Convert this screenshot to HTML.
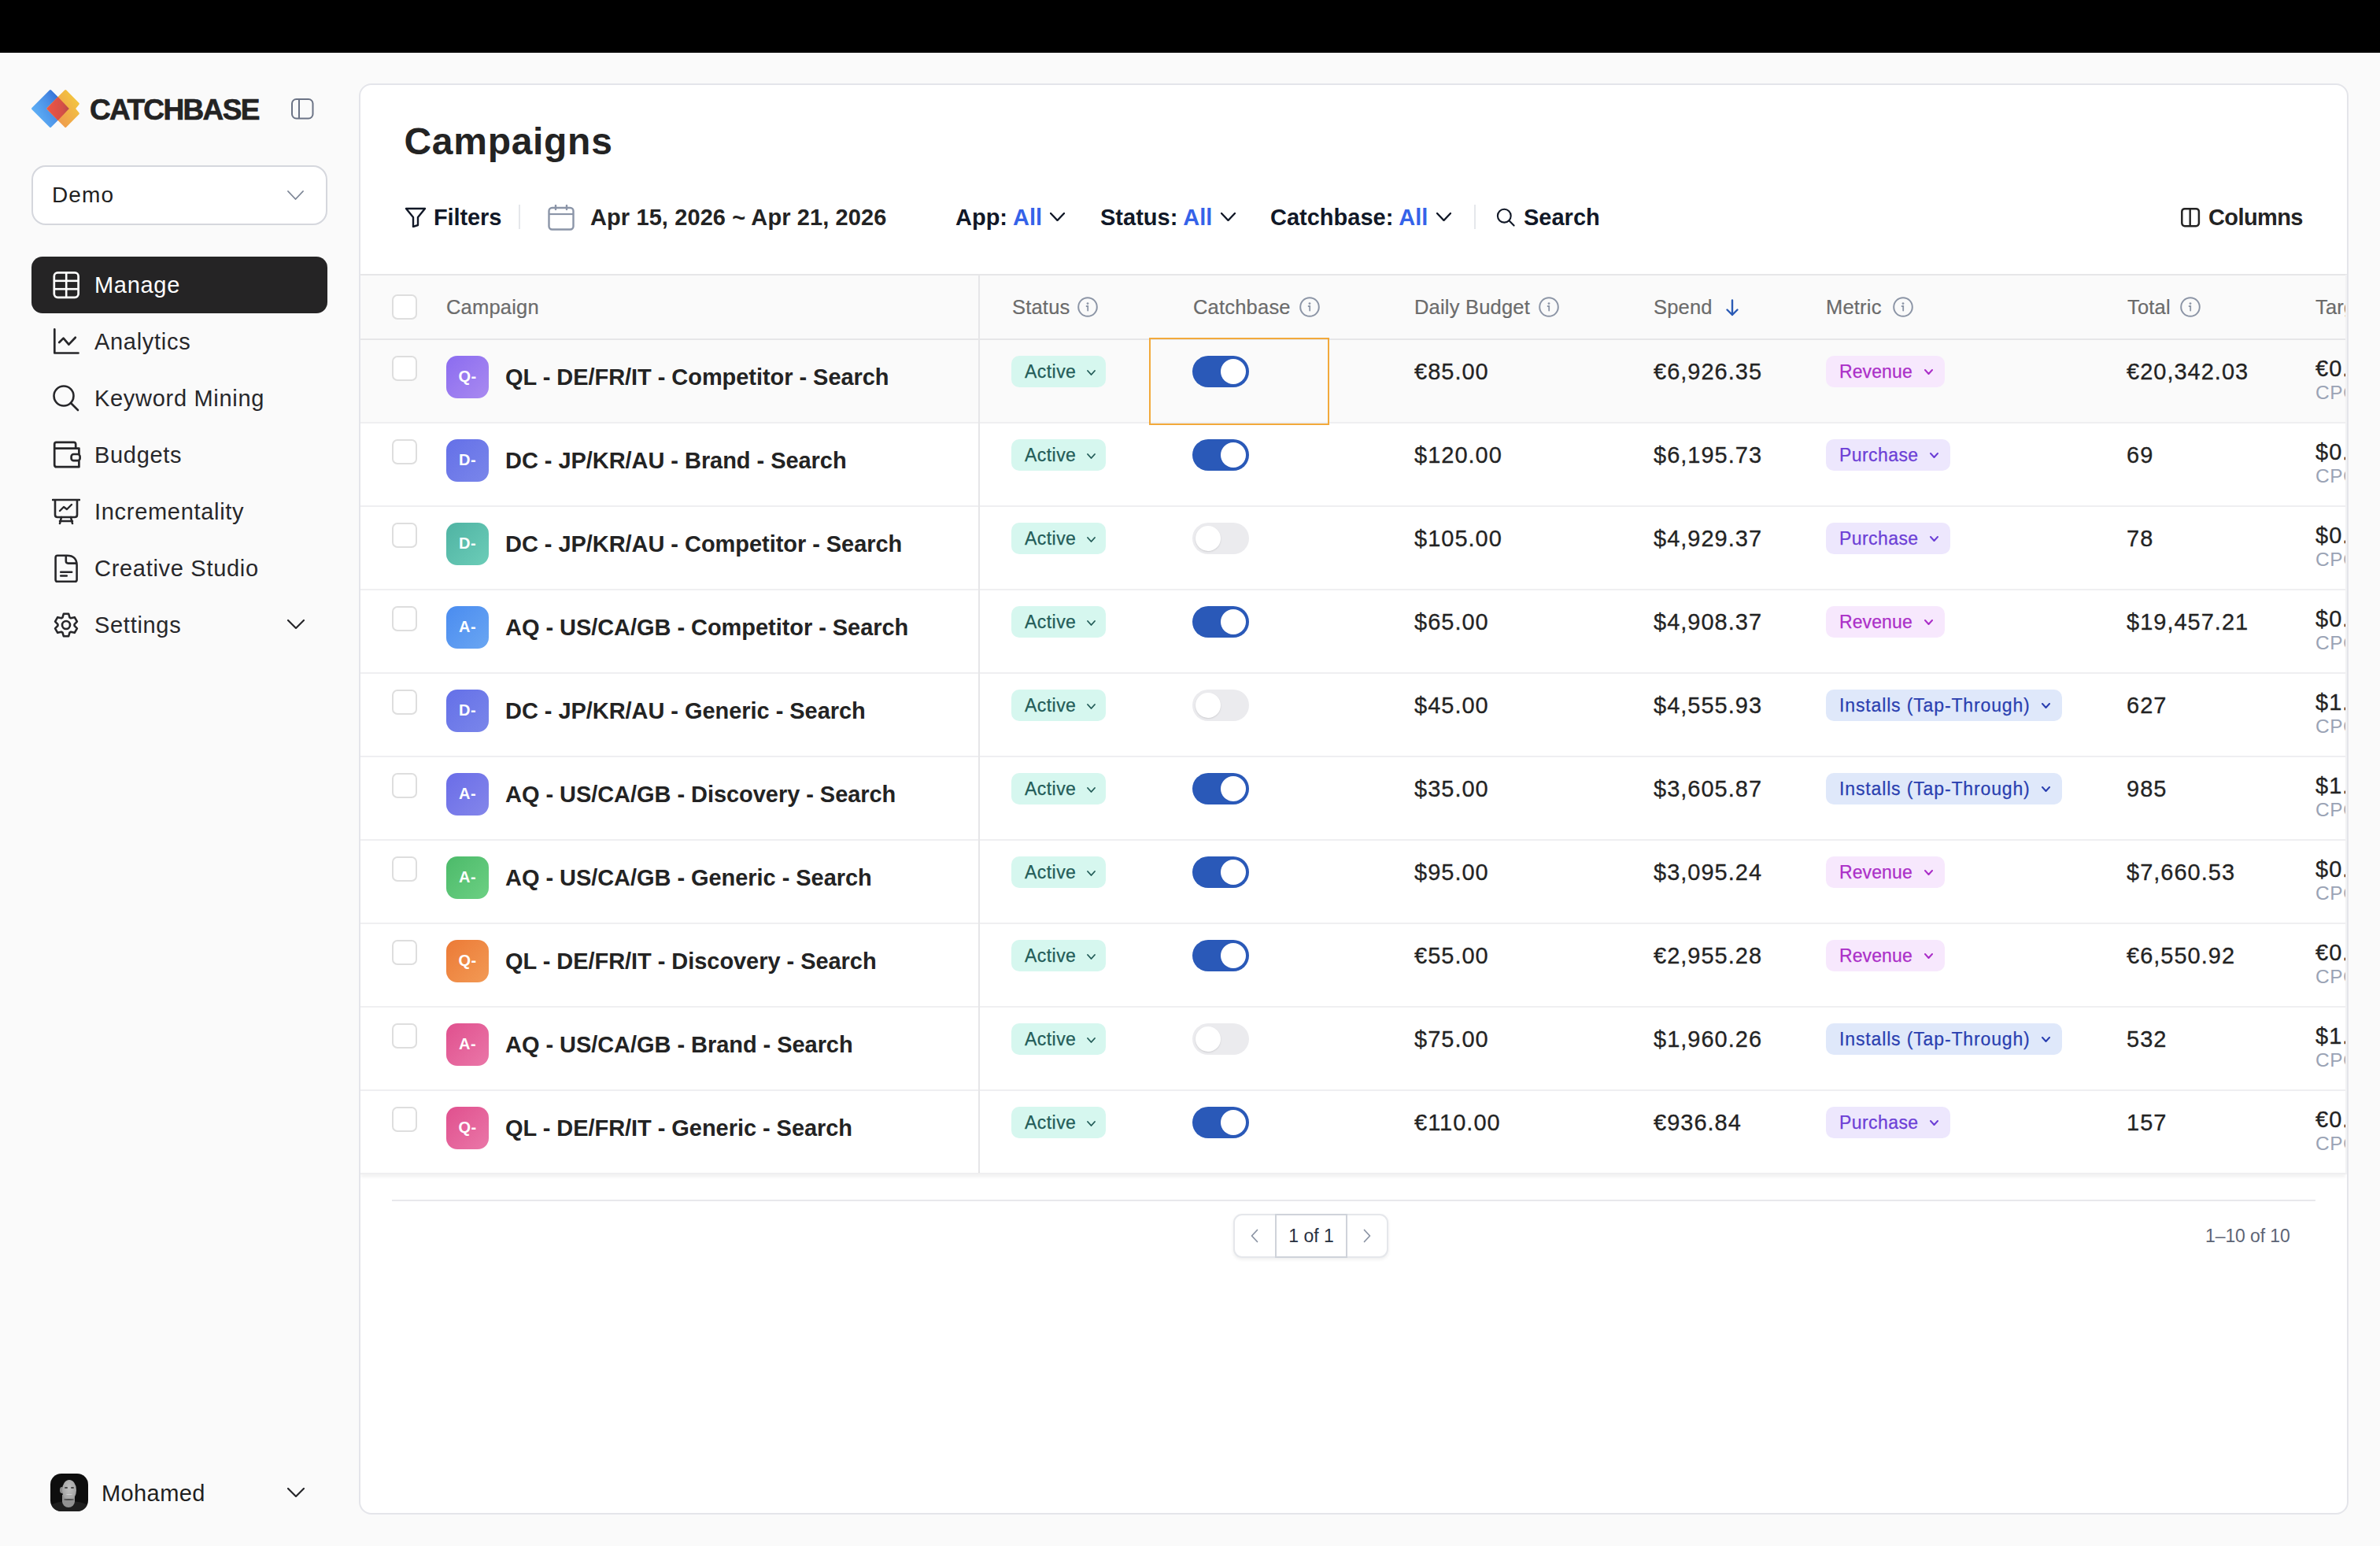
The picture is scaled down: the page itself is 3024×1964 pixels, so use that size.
<!DOCTYPE html>
<html><head><meta charset="utf-8">
<style>
html,body{margin:0;padding:0;}
body{width:3024px;height:1964px;overflow:hidden;background:#fafafa;font-family:"Liberation Sans",sans-serif;color:#232323;position:relative;}
.abs{position:absolute;}
.t{position:absolute;white-space:nowrap;line-height:1;}
</style></head><body>
<div class="abs" style="left:0;top:0;width:3024px;height:67px;background:#000"></div>

<svg class="abs" style="left:36px;top:110px" width="70" height="56" viewBox="36 110 70 56">
<defs>
<linearGradient id="gb" gradientUnits="userSpaceOnUse" x1="44" y1="150" x2="84" y2="128"><stop offset="0" stop-color="#5fb2f7"/><stop offset="0.55" stop-color="#4a8fe6"/><stop offset="1" stop-color="#2a62cf"/></linearGradient>
<linearGradient id="go" gradientUnits="userSpaceOnUse" x1="66" y1="150" x2="101" y2="128"><stop offset="0" stop-color="#ee9650"/><stop offset="1" stop-color="#f3c73e"/></linearGradient>
<linearGradient id="gr" gradientUnits="userSpaceOnUse" x1="60" y1="138" x2="88" y2="138"><stop offset="0" stop-color="#ee5545"/><stop offset="0.7" stop-color="#d44f47"/><stop offset="1" stop-color="#b84a4a"/></linearGradient>
</defs>
<polygon points="41.5,138 64,115.5 86.5,138 64,160.5" fill="url(#gb)" stroke="url(#gb)" stroke-width="3" stroke-linejoin="round"/>
<polygon points="83.2,115.5 99.3,131.7 94.2,138 99.3,144.3 83.2,160.5 60.7,138" fill="url(#go)" stroke="url(#go)" stroke-width="3" stroke-linejoin="round"/>
<polygon points="59.3,138 73.6,123 87.8,138 73.6,153" fill="url(#gr)"/>
</svg>
<div class="t" style="left:114px;top:121px;font-size:37px;font-weight:bold;color:#232323;letter-spacing:-1.65px;-webkit-text-stroke:0.7px #232323">CATCHBASE</div>
<svg class="abs" style="left:369px;top:124px" width="30" height="28" viewBox="0 0 30 28"><rect x="2" y="2" width="26.5" height="24.5" rx="5.5" fill="none" stroke="#6b7385" stroke-width="2"/><line x1="11" y1="2" x2="11" y2="26.5" stroke="#6b7385" stroke-width="2"/></svg>
<div class="abs" style="left:40px;top:210px;width:374px;height:73px;border:2px solid #d5d7dd;border-radius:18px;background:#fff;box-sizing:border-box;width:376px;height:76px"></div>
<div class="t" style="left:66px;top:234px;font-size:28px;color:#1f1f1f;letter-spacing:1.1px">Demo</div>

<svg class="abs" style="left:365px;top:242px" width="21" height="12" viewBox="0 0 21 12"><path d="M1 1 L10.5 11 L20 1" fill="none" stroke="#7b8494" stroke-width="1.8" stroke-linecap="round" stroke-linejoin="round"/></svg>
<div class="abs" style="left:40px;top:326px;width:376px;height:72px;background:#252425;border-radius:14px"></div>
<div class="t" style="left:120px;top:348px;font-size:29px;color:#fff;letter-spacing:0.7px">Manage</div>
<div class="t" style="left:120px;top:420px;font-size:29px;color:#27272a;letter-spacing:0.7px">Analytics</div>
<div class="t" style="left:120px;top:492px;font-size:29px;color:#27272a;letter-spacing:0.7px">Keyword Mining</div>
<div class="t" style="left:120px;top:564px;font-size:29px;color:#27272a;letter-spacing:0.7px">Budgets</div>
<div class="t" style="left:120px;top:636px;font-size:29px;color:#27272a;letter-spacing:0.7px">Incrementality</div>
<div class="t" style="left:120px;top:708px;font-size:29px;color:#27272a;letter-spacing:0.7px">Creative Studio</div>
<div class="t" style="left:120px;top:780px;font-size:29px;color:#27272a;letter-spacing:0.7px">Settings</div>
<svg class="abs" style="left:66px;top:344px" width="36" height="36" viewBox="0 0 36 36"><rect x="2.8" y="2.4" width="30.8" height="31.4" rx="4.5" fill="none" stroke="#fff" stroke-width="2.7"/><line x1="2.8" y1="12.8" x2="33.6" y2="12.8" stroke="#fff" stroke-width="2.6"/><line x1="2.8" y1="23.2" x2="33.6" y2="23.2" stroke="#fff" stroke-width="2.6"/><line x1="18.2" y1="2.4" x2="18.2" y2="33.8" stroke="#fff" stroke-width="2.6"/></svg>
<svg class="abs" style="left:66px;top:416px" width="36" height="36" viewBox="0 0 36 36"><path d="M3.3 2.4 V32.5 H33.5" fill="none" stroke="#27272a" stroke-width="2.7" stroke-linecap="round" stroke-linejoin="round"/><path d="M9.2 19 L14.6 13.6 L21.4 21.6 L29.8 12.7" fill="none" stroke="#27272a" stroke-width="2.7" stroke-linecap="round" stroke-linejoin="round"/></svg>
<svg class="abs" style="left:66px;top:488px" width="36" height="36" viewBox="0 0 36 36"><circle cx="15" cy="15" r="12.5" fill="none" stroke="#27272a" stroke-width="2.6"/><line x1="24" y1="24" x2="33" y2="33" stroke="#27272a" stroke-width="2.6" stroke-linecap="round"/></svg>
<svg class="abs" style="left:66px;top:560px" width="40" height="36" viewBox="0 0 40 36"><path d="M30.2 9.6 V4.2 Q30.2 1.8 27.8 1.8 H5.6 Q3.2 1.8 3.2 4.6 V30.4 Q3.2 33.2 6 33.2 H34.4 V25.2 M34.4 17 V9.6 H3.2" fill="none" stroke="#27272a" stroke-width="2.7" stroke-linejoin="round"/><rect x="24.6" y="17" width="11" height="8.2" rx="3" fill="none" stroke="#27272a" stroke-width="2.7"/></svg>
<svg class="abs" style="left:66px;top:632px" width="36" height="36" viewBox="0 0 36 36"><line x1="1" y1="3" x2="35" y2="3" stroke="#27272a" stroke-width="2.6" stroke-linecap="round"/><path d="M4 3 V22 Q4 25 7 25 H29 Q32 25 32 22 V2" fill="none" stroke="#27272a" stroke-width="2.6"/><path d="M10 17 L15 12 L19 15 L25 9" fill="none" stroke="#27272a" stroke-width="2.4" stroke-linecap="round" stroke-linejoin="round"/><path d="M12 25 L10 33 M24 25 L26 33 M10 30 H26" fill="none" stroke="#27272a" stroke-width="2.6" stroke-linecap="round"/></svg>
<svg class="abs" style="left:66px;top:704px" width="38" height="38" viewBox="0 0 38 38"><path d="M19 1.8 H7 Q4.6 1.8 4.6 4.4 V32.4 Q4.6 34.8 7 34.8 H29.2 Q31.6 34.8 31.6 32.4 V14 Q31.6 1.8 19 1.8 Z" fill="none" stroke="#27272a" stroke-width="2.6" stroke-linejoin="round"/><path d="M17.8 2.2 V8.8 Q17.8 11.6 20.6 11.6 H31.2" fill="none" stroke="#27272a" stroke-width="2.6"/><line x1="11.2" y1="22.7" x2="25.2" y2="22.7" stroke="#27272a" stroke-width="2.5" stroke-linecap="round"/><line x1="11.2" y1="27.6" x2="18.8" y2="27.6" stroke="#27272a" stroke-width="2.5" stroke-linecap="round"/></svg>
<svg class="abs" style="left:64px;top:774px" width="40" height="40" viewBox="0 0 40 40"><path fill="none" stroke="#27272a" stroke-width="2.6" stroke-linejoin="round" d="M30.56 20.92 L33.92 24.39 L30.76 29.86 L26.08 28.68 L24.48 29.61 L23.16 34.25 L16.84 34.25 L15.52 29.61 L13.92 28.68 L9.24 29.86 L6.08 24.39 L9.44 20.92 L9.44 19.08 L6.08 15.61 L9.24 10.14 L13.92 11.32 L15.52 10.39 L16.84 5.75 L23.16 5.75 L24.48 10.39 L26.08 11.32 L30.76 10.14 L33.92 15.61 L30.56 19.08 Z"/><circle cx="20" cy="20" r="5" fill="none" stroke="#27272a" stroke-width="2.6"/></svg>
<svg class="abs" style="left:365px;top:787px" width="22" height="12" viewBox="0 0 22 12"><path d="M1 1 L11.0 11 L21 1" fill="none" stroke="#27272a" stroke-width="2.2" stroke-linecap="round" stroke-linejoin="round"/></svg>
<div class="abs" style="left:64px;top:1872px;width:48px;height:48px;border-radius:14px;background:#0e0e0e;overflow:hidden">
<div class="abs" style="left:-2px;top:35px;width:52px;height:20px;border-radius:50% 50% 0 0 / 45% 45% 0 0;background:#1f1f1f"></div>
<div class="abs" style="left:14.5px;top:27px;width:16px;height:15.5px;border-radius:0 0 50% 50%;background:#929292"></div>
<div class="abs" style="left:11.5px;top:17px;width:5px;height:8px;border-radius:50%;background:#8a8a8a"></div>
<div class="abs" style="left:14.5px;top:7.5px;width:18.5px;height:26px;border-radius:50% 50% 48% 48%;background:radial-gradient(ellipse at 50% 40%,#c0c0c0 0%,#a8a8a8 60%,#8a8a8a 100%)"></div>
<div class="abs" style="left:17.5px;top:16.5px;width:4px;height:2px;background:#4a4a4a;border-radius:1px"></div>
<div class="abs" style="left:26px;top:16.5px;width:4px;height:2px;background:#4a4a4a;border-radius:1px"></div>
<div class="abs" style="left:17px;top:32px;width:13px;height:2px;background:#4c4c4c;border-radius:50%"></div>
<div class="abs" style="left:19.5px;top:25.5px;width:8px;height:1.5px;background:#d0d0d0;border-radius:50%"></div>
</div>
<div class="t" style="left:129px;top:1883px;font-size:29px;color:#1f1f1f;letter-spacing:0.4px">Mohamed</div>
<svg class="abs" style="left:365px;top:1890px" width="22" height="12" viewBox="0 0 22 12"><path d="M1 1 L11.0 11 L21 1" fill="none" stroke="#27272a" stroke-width="2.2" stroke-linecap="round" stroke-linejoin="round"/></svg>
<div class="abs" style="left:456px;top:106px;width:2528px;height:1818px;box-sizing:border-box;border:2px solid #e4e5ea;border-radius:16px;background:#fff;overflow:hidden">
<div class="t" style="left:55.5px;top:48px;font-size:48px;font-weight:bold;color:#232323;letter-spacing:0.7px">Campaigns</div>
<svg class="abs" style="left:56px;top:155px" width="28" height="26" viewBox="0 0 28 26"><path d="M2 2 H26 L17 13 V23 L11 25 V13 Z" fill="none" stroke="#111827" stroke-width="2.4" stroke-linejoin="round"/></svg>
<div class="t" style="left:93px;top:154px;font-size:29px;font-weight:bold;color:#111827;letter-spacing:-0.1px">Filters</div>
<div class="abs" style="left:201px;top:152px;width:2px;height:31px;background:#e5e7eb"></div>
<svg class="abs" style="left:238px;top:152px" width="34" height="33" viewBox="0 0 34 33"><rect x="1.5" y="4" width="31" height="27.5" rx="4" fill="none" stroke="#8b95a8" stroke-width="2.4"/><line x1="1.5" y1="12" x2="32.5" y2="12" stroke="#8b95a8" stroke-width="2.2"/><line x1="10" y1="1" x2="10" y2="6" stroke="#8b95a8" stroke-width="2.4" stroke-linecap="round"/><line x1="24" y1="1" x2="24" y2="6" stroke="#8b95a8" stroke-width="2.4" stroke-linecap="round"/></svg>
<div class="t" style="left:292px;top:154px;font-size:29px;font-weight:bold;color:#232323;letter-spacing:0.1px">Apr 15, 2026 ~ Apr 21, 2026</div>
<div class="t" style="left:756px;top:154px;font-size:29px;font-weight:bold;color:#111827">App: <span style="color:#3563e9">All</span></div>
<svg class="abs" style="left:876px;top:162px" width="19" height="11" viewBox="0 0 19 11"><path d="M1 1 L9.5 10 L18 1" fill="none" stroke="#111827" stroke-width="2.4" stroke-linecap="round" stroke-linejoin="round"/></svg>
<div class="t" style="left:940px;top:154px;font-size:29px;font-weight:bold;color:#111827">Status: <span style="color:#3563e9">All</span></div>
<svg class="abs" style="left:1093px;top:162px" width="19" height="11" viewBox="0 0 19 11"><path d="M1 1 L9.5 10 L18 1" fill="none" stroke="#111827" stroke-width="2.4" stroke-linecap="round" stroke-linejoin="round"/></svg>
<div class="t" style="left:1156px;top:154px;font-size:29px;font-weight:bold;color:#111827">Catchbase: <span style="color:#3563e9">All</span></div>
<svg class="abs" style="left:1367px;top:162px" width="19" height="11" viewBox="0 0 19 11"><path d="M1 1 L9.5 10 L18 1" fill="none" stroke="#111827" stroke-width="2.4" stroke-linecap="round" stroke-linejoin="round"/></svg>
<div class="abs" style="left:1415px;top:152px;width:2px;height:31px;background:#e5e7eb"></div>
<svg class="abs" style="left:1442px;top:155px" width="26" height="26" viewBox="0 0 26 26"><circle cx="11.3" cy="11.2" r="8.4" fill="none" stroke="#111827" stroke-width="2.1"/><line x1="17.4" y1="17.3" x2="23.6" y2="23.6" stroke="#111827" stroke-width="2.1" stroke-linecap="round"/></svg>
<div class="t" style="left:1478px;top:154px;font-size:29px;font-weight:bold;color:#111827">Search</div>
<svg class="abs" style="left:2312px;top:155px" width="26" height="26" viewBox="0 0 26 26"><rect x="2.3" y="2.2" width="21.6" height="22" rx="3.6" fill="none" stroke="#232323" stroke-width="2.5"/><line x1="12.7" y1="2.5" x2="12.7" y2="24" stroke="#232323" stroke-width="2.4"/></svg>
<div class="t" style="left:2348px;top:154px;font-size:29px;font-weight:bold;color:#232323;letter-spacing:-0.6px">Columns</div>
<div class="abs" style="left:0;top:240px;width:2540px;height:84px;background:#fafafa;border-top:2px solid #e6e6e8;border-bottom:2px solid #e6e6e8;box-sizing:border-box"></div>
<div class="abs" style="left:40px;top:266px;width:32px;height:32px;box-sizing:border-box;border:2px solid #dedede;border-radius:7px;background:#fff"></div>
<div class="t" style="left:109px;top:270px;font-size:25.5px;color:#6b6b6b;letter-spacing:0.2px;-webkit-text-stroke:0.2px #6b6b6b">Campaign</div>
<div class="t" style="left:828px;top:270px;font-size:25.5px;color:#6b6b6b;letter-spacing:0.2px;-webkit-text-stroke:0.2px #6b6b6b">Status</div>
<svg class="abs" style="left:911px;top:269px" width="26" height="26" viewBox="0 0 26 26"><circle cx="13" cy="13" r="11.8" fill="none" stroke="#8c95a6" stroke-width="2"/><circle cx="13" cy="8.6" r="1.4" fill="#8c95a6"/><path d="M11.6 12 L13.2 12 L13.2 17.6" fill="none" stroke="#8c95a6" stroke-width="1.8" stroke-linecap="round"/></svg>
<div class="t" style="left:1058px;top:270px;font-size:25.5px;color:#6b6b6b;letter-spacing:0.2px;-webkit-text-stroke:0.2px #6b6b6b">Catchbase</div>
<svg class="abs" style="left:1193px;top:269px" width="26" height="26" viewBox="0 0 26 26"><circle cx="13" cy="13" r="11.8" fill="none" stroke="#8c95a6" stroke-width="2"/><circle cx="13" cy="8.6" r="1.4" fill="#8c95a6"/><path d="M11.6 12 L13.2 12 L13.2 17.6" fill="none" stroke="#8c95a6" stroke-width="1.8" stroke-linecap="round"/></svg>
<div class="t" style="left:1339px;top:270px;font-size:25.5px;color:#6b6b6b;letter-spacing:0.2px;-webkit-text-stroke:0.2px #6b6b6b">Daily Budget</div>
<svg class="abs" style="left:1497px;top:269px" width="26" height="26" viewBox="0 0 26 26"><circle cx="13" cy="13" r="11.8" fill="none" stroke="#8c95a6" stroke-width="2"/><circle cx="13" cy="8.6" r="1.4" fill="#8c95a6"/><path d="M11.6 12 L13.2 12 L13.2 17.6" fill="none" stroke="#8c95a6" stroke-width="1.8" stroke-linecap="round"/></svg>
<div class="t" style="left:1643px;top:270px;font-size:25.5px;color:#6b6b6b;letter-spacing:0.2px;-webkit-text-stroke:0.2px #6b6b6b">Spend</div>
<svg class="abs" style="left:1734px;top:272px" width="18" height="22" viewBox="0 0 18 22"><path d="M9 1.5 V20 M2.5 13.5 L9 20 L15.5 13.5" fill="none" stroke="#2b5bb5" stroke-width="2.4" stroke-linecap="round" stroke-linejoin="round"/></svg>
<div class="t" style="left:1862px;top:270px;font-size:25.5px;color:#6b6b6b;letter-spacing:0.2px;-webkit-text-stroke:0.2px #6b6b6b">Metric</div>
<svg class="abs" style="left:1947px;top:269px" width="26" height="26" viewBox="0 0 26 26"><circle cx="13" cy="13" r="11.8" fill="none" stroke="#8c95a6" stroke-width="2"/><circle cx="13" cy="8.6" r="1.4" fill="#8c95a6"/><path d="M11.6 12 L13.2 12 L13.2 17.6" fill="none" stroke="#8c95a6" stroke-width="1.8" stroke-linecap="round"/></svg>
<div class="t" style="left:2245px;top:270px;font-size:25.5px;color:#6b6b6b;letter-spacing:0.2px;-webkit-text-stroke:0.2px #6b6b6b">Total</div>
<svg class="abs" style="left:2312px;top:269px" width="26" height="26" viewBox="0 0 26 26"><circle cx="13" cy="13" r="11.8" fill="none" stroke="#8c95a6" stroke-width="2"/><circle cx="13" cy="8.6" r="1.4" fill="#8c95a6"/><path d="M11.6 12 L13.2 12 L13.2 17.6" fill="none" stroke="#8c95a6" stroke-width="1.8" stroke-linecap="round"/></svg>
<div class="t" style="left:2484px;top:270px;font-size:25.5px;color:#6b6b6b;letter-spacing:0.2px;-webkit-text-stroke:0.2px #6b6b6b">Target</div>
<div class="abs" style="left:0;top:324px;width:2540px;height:106px;background:#fafafa;border-bottom:2px solid #efeff1;box-sizing:border-box"></div>
<div class="abs" style="left:40px;top:344px;width:32px;height:32px;box-sizing:border-box;border:2px solid #dedede;border-radius:7px;background:#fff"></div>
<div class="abs" style="left:109px;top:344px;width:54px;height:54px;border-radius:14px;background:linear-gradient(135deg,#8b6cf0,#a98af0);color:#fff;font-size:20px;font-weight:bold;text-align:center;line-height:52px;letter-spacing:0.5px">Q-</div>
<div class="t" style="left:184px;top:357px;font-size:29px;font-weight:bold;color:#232323;letter-spacing:-0.05px">QL - DE/FR/IT - Competitor - Search</div>
<div class="abs" style="left:827px;top:344px;width:120px;height:40px;border-radius:10px;background:#d6f7ef"></div>
<div class="t" style="left:844px;top:353px;font-size:23px;color:#235c58;letter-spacing:0.45px;-webkit-text-stroke:0.25px #235c58">Active</div>
<svg class="abs" style="left:922.5px;top:361.5px" width="11" height="7" viewBox="0 0 11 7"><path d="M1 1 L5.5 6 L10 1" fill="none" stroke="#235c58" stroke-width="1.8" stroke-linecap="round" stroke-linejoin="round"/></svg>
<div class="abs" style="left:1057px;top:344px;width:72px;height:40px;border-radius:20px;background:#2a59b8"></div>
<div class="abs" style="left:1093px;top:348px;width:32px;height:32px;border-radius:50%;background:#fff"></div>
<div class="t" style="left:1339px;top:350px;font-size:29px;color:#232323;letter-spacing:1px;-webkit-text-stroke:0.3px #232323">€85.00</div>
<div class="t" style="left:1643px;top:350px;font-size:29px;color:#232323;letter-spacing:1px;-webkit-text-stroke:0.3px #232323">€6,926.35</div>
<div class="abs" style="left:1862px;top:344px;height:40px;border-radius:10px;background:#f7e8fd;padding:0 15px 0 17px;box-sizing:border-box;display:flex;align-items:center"><div style="font-size:23px;color:#ab2fc8;line-height:40px;white-space:nowrap;letter-spacing:0.1px;-webkit-text-stroke:0.25px #ab2fc8">Revenue</div><svg style="margin-left:14.90px" width="11" height="7" viewBox="0 0 11 7"><path d="M1 1 L5.5 6 L10 1" fill="none" stroke="#ab2fc8" stroke-width="2" stroke-linecap="round" stroke-linejoin="round"/></svg></div>
<div class="t" style="left:2244px;top:350px;font-size:29px;color:#232323;letter-spacing:1px;-webkit-text-stroke:0.3px #232323">€20,342.03</div>
<div class="t" style="left:2484px;top:346px;font-size:29px;color:#232323;letter-spacing:1px;-webkit-text-stroke:0.3px #232323">€0.48</div>
<div class="t" style="left:2484px;top:379px;font-size:24.5px;color:#9aa3b5;letter-spacing:0.6px">CPO</div>
<div class="abs" style="left:0;top:430px;width:2540px;height:106px;background:#fff;border-bottom:2px solid #efeff1;box-sizing:border-box"></div>
<div class="abs" style="left:40px;top:450px;width:32px;height:32px;box-sizing:border-box;border:2px solid #dedede;border-radius:7px;background:#fff"></div>
<div class="abs" style="left:109px;top:450px;width:54px;height:54px;border-radius:14px;background:linear-gradient(135deg,#6470e8,#7a86ea);color:#fff;font-size:20px;font-weight:bold;text-align:center;line-height:52px;letter-spacing:0.5px">D-</div>
<div class="t" style="left:184px;top:463px;font-size:29px;font-weight:bold;color:#232323;letter-spacing:-0.05px">DC - JP/KR/AU - Brand - Search</div>
<div class="abs" style="left:827px;top:450px;width:120px;height:40px;border-radius:10px;background:#d6f7ef"></div>
<div class="t" style="left:844px;top:459px;font-size:23px;color:#235c58;letter-spacing:0.45px;-webkit-text-stroke:0.25px #235c58">Active</div>
<svg class="abs" style="left:922.5px;top:467.5px" width="11" height="7" viewBox="0 0 11 7"><path d="M1 1 L5.5 6 L10 1" fill="none" stroke="#235c58" stroke-width="1.8" stroke-linecap="round" stroke-linejoin="round"/></svg>
<div class="abs" style="left:1057px;top:450px;width:72px;height:40px;border-radius:20px;background:#2a59b8"></div>
<div class="abs" style="left:1093px;top:454px;width:32px;height:32px;border-radius:50%;background:#fff"></div>
<div class="t" style="left:1339px;top:456px;font-size:29px;color:#232323;letter-spacing:1px;-webkit-text-stroke:0.3px #232323">$120.00</div>
<div class="t" style="left:1643px;top:456px;font-size:29px;color:#232323;letter-spacing:1px;-webkit-text-stroke:0.3px #232323">$6,195.73</div>
<div class="abs" style="left:1862px;top:450px;height:40px;border-radius:10px;background:#ede7fd;padding:0 15px 0 17px;box-sizing:border-box;display:flex;align-items:center"><div style="font-size:23px;color:#6c3fd6;line-height:40px;white-space:nowrap;letter-spacing:0.42px;-webkit-text-stroke:0.25px #6c3fd6">Purchase</div><svg style="margin-left:14.58px" width="11" height="7" viewBox="0 0 11 7"><path d="M1 1 L5.5 6 L10 1" fill="none" stroke="#6c3fd6" stroke-width="2" stroke-linecap="round" stroke-linejoin="round"/></svg></div>
<div class="t" style="left:2244px;top:456px;font-size:29px;color:#232323;letter-spacing:1px;-webkit-text-stroke:0.3px #232323">69</div>
<div class="t" style="left:2484px;top:452px;font-size:29px;color:#232323;letter-spacing:1px;-webkit-text-stroke:0.3px #232323">$0.89</div>
<div class="t" style="left:2484px;top:485px;font-size:24.5px;color:#9aa3b5;letter-spacing:0.6px">CPO</div>
<div class="abs" style="left:0;top:536px;width:2540px;height:106px;background:#fff;border-bottom:2px solid #efeff1;box-sizing:border-box"></div>
<div class="abs" style="left:40px;top:556px;width:32px;height:32px;box-sizing:border-box;border:2px solid #dedede;border-radius:7px;background:#fff"></div>
<div class="abs" style="left:109px;top:556px;width:54px;height:54px;border-radius:14px;background:linear-gradient(135deg,#4fb3a3,#6ccdb8);color:#fff;font-size:20px;font-weight:bold;text-align:center;line-height:52px;letter-spacing:0.5px">D-</div>
<div class="t" style="left:184px;top:569px;font-size:29px;font-weight:bold;color:#232323;letter-spacing:-0.05px">DC - JP/KR/AU - Competitor - Search</div>
<div class="abs" style="left:827px;top:556px;width:120px;height:40px;border-radius:10px;background:#d6f7ef"></div>
<div class="t" style="left:844px;top:565px;font-size:23px;color:#235c58;letter-spacing:0.45px;-webkit-text-stroke:0.25px #235c58">Active</div>
<svg class="abs" style="left:922.5px;top:573.5px" width="11" height="7" viewBox="0 0 11 7"><path d="M1 1 L5.5 6 L10 1" fill="none" stroke="#235c58" stroke-width="1.8" stroke-linecap="round" stroke-linejoin="round"/></svg>
<div class="abs" style="left:1057px;top:556px;width:72px;height:40px;border-radius:20px;background:#ebebee"></div>
<div class="abs" style="left:1061px;top:560px;width:32px;height:32px;border-radius:50%;background:#fff;box-shadow:0 1px 2px rgba(0,0,0,.12)"></div>
<div class="t" style="left:1339px;top:562px;font-size:29px;color:#232323;letter-spacing:1px;-webkit-text-stroke:0.3px #232323">$105.00</div>
<div class="t" style="left:1643px;top:562px;font-size:29px;color:#232323;letter-spacing:1px;-webkit-text-stroke:0.3px #232323">$4,929.37</div>
<div class="abs" style="left:1862px;top:556px;height:40px;border-radius:10px;background:#ede7fd;padding:0 15px 0 17px;box-sizing:border-box;display:flex;align-items:center"><div style="font-size:23px;color:#6c3fd6;line-height:40px;white-space:nowrap;letter-spacing:0.42px;-webkit-text-stroke:0.25px #6c3fd6">Purchase</div><svg style="margin-left:14.58px" width="11" height="7" viewBox="0 0 11 7"><path d="M1 1 L5.5 6 L10 1" fill="none" stroke="#6c3fd6" stroke-width="2" stroke-linecap="round" stroke-linejoin="round"/></svg></div>
<div class="t" style="left:2244px;top:562px;font-size:29px;color:#232323;letter-spacing:1px;-webkit-text-stroke:0.3px #232323">78</div>
<div class="t" style="left:2484px;top:558px;font-size:29px;color:#232323;letter-spacing:1px;-webkit-text-stroke:0.3px #232323">$0.63</div>
<div class="t" style="left:2484px;top:591px;font-size:24.5px;color:#9aa3b5;letter-spacing:0.6px">CPO</div>
<div class="abs" style="left:0;top:642px;width:2540px;height:106px;background:#fff;border-bottom:2px solid #efeff1;box-sizing:border-box"></div>
<div class="abs" style="left:40px;top:662px;width:32px;height:32px;box-sizing:border-box;border:2px solid #dedede;border-radius:7px;background:#fff"></div>
<div class="abs" style="left:109px;top:662px;width:54px;height:54px;border-radius:14px;background:linear-gradient(135deg,#4a8cf0,#6aa6f2);color:#fff;font-size:20px;font-weight:bold;text-align:center;line-height:52px;letter-spacing:0.5px">A-</div>
<div class="t" style="left:184px;top:675px;font-size:29px;font-weight:bold;color:#232323;letter-spacing:-0.05px">AQ - US/CA/GB - Competitor - Search</div>
<div class="abs" style="left:827px;top:662px;width:120px;height:40px;border-radius:10px;background:#d6f7ef"></div>
<div class="t" style="left:844px;top:671px;font-size:23px;color:#235c58;letter-spacing:0.45px;-webkit-text-stroke:0.25px #235c58">Active</div>
<svg class="abs" style="left:922.5px;top:679.5px" width="11" height="7" viewBox="0 0 11 7"><path d="M1 1 L5.5 6 L10 1" fill="none" stroke="#235c58" stroke-width="1.8" stroke-linecap="round" stroke-linejoin="round"/></svg>
<div class="abs" style="left:1057px;top:662px;width:72px;height:40px;border-radius:20px;background:#2a59b8"></div>
<div class="abs" style="left:1093px;top:666px;width:32px;height:32px;border-radius:50%;background:#fff"></div>
<div class="t" style="left:1339px;top:668px;font-size:29px;color:#232323;letter-spacing:1px;-webkit-text-stroke:0.3px #232323">$65.00</div>
<div class="t" style="left:1643px;top:668px;font-size:29px;color:#232323;letter-spacing:1px;-webkit-text-stroke:0.3px #232323">$4,908.37</div>
<div class="abs" style="left:1862px;top:662px;height:40px;border-radius:10px;background:#f7e8fd;padding:0 15px 0 17px;box-sizing:border-box;display:flex;align-items:center"><div style="font-size:23px;color:#ab2fc8;line-height:40px;white-space:nowrap;letter-spacing:0.1px;-webkit-text-stroke:0.25px #ab2fc8">Revenue</div><svg style="margin-left:14.90px" width="11" height="7" viewBox="0 0 11 7"><path d="M1 1 L5.5 6 L10 1" fill="none" stroke="#ab2fc8" stroke-width="2" stroke-linecap="round" stroke-linejoin="round"/></svg></div>
<div class="t" style="left:2244px;top:668px;font-size:29px;color:#232323;letter-spacing:1px;-webkit-text-stroke:0.3px #232323">$19,457.21</div>
<div class="t" style="left:2484px;top:664px;font-size:29px;color:#232323;letter-spacing:1px;-webkit-text-stroke:0.3px #232323">$0.25</div>
<div class="t" style="left:2484px;top:697px;font-size:24.5px;color:#9aa3b5;letter-spacing:0.6px">CPO</div>
<div class="abs" style="left:0;top:748px;width:2540px;height:106px;background:#fff;border-bottom:2px solid #efeff1;box-sizing:border-box"></div>
<div class="abs" style="left:40px;top:768px;width:32px;height:32px;box-sizing:border-box;border:2px solid #dedede;border-radius:7px;background:#fff"></div>
<div class="abs" style="left:109px;top:768px;width:54px;height:54px;border-radius:14px;background:linear-gradient(135deg,#6470e8,#7a86ea);color:#fff;font-size:20px;font-weight:bold;text-align:center;line-height:52px;letter-spacing:0.5px">D-</div>
<div class="t" style="left:184px;top:781px;font-size:29px;font-weight:bold;color:#232323;letter-spacing:-0.05px">DC - JP/KR/AU - Generic - Search</div>
<div class="abs" style="left:827px;top:768px;width:120px;height:40px;border-radius:10px;background:#d6f7ef"></div>
<div class="t" style="left:844px;top:777px;font-size:23px;color:#235c58;letter-spacing:0.45px;-webkit-text-stroke:0.25px #235c58">Active</div>
<svg class="abs" style="left:922.5px;top:785.5px" width="11" height="7" viewBox="0 0 11 7"><path d="M1 1 L5.5 6 L10 1" fill="none" stroke="#235c58" stroke-width="1.8" stroke-linecap="round" stroke-linejoin="round"/></svg>
<div class="abs" style="left:1057px;top:768px;width:72px;height:40px;border-radius:20px;background:#ebebee"></div>
<div class="abs" style="left:1061px;top:772px;width:32px;height:32px;border-radius:50%;background:#fff;box-shadow:0 1px 2px rgba(0,0,0,.12)"></div>
<div class="t" style="left:1339px;top:774px;font-size:29px;color:#232323;letter-spacing:1px;-webkit-text-stroke:0.3px #232323">$45.00</div>
<div class="t" style="left:1643px;top:774px;font-size:29px;color:#232323;letter-spacing:1px;-webkit-text-stroke:0.3px #232323">$4,555.93</div>
<div class="abs" style="left:1862px;top:768px;height:40px;border-radius:10px;background:#dfe8fa;padding:0 15px 0 17px;box-sizing:border-box;display:flex;align-items:center"><div style="font-size:23px;color:#2a3fb0;line-height:40px;white-space:nowrap;letter-spacing:0.86px;-webkit-text-stroke:0.25px #2a3fb0">Installs (Tap-Through)</div><svg style="margin-left:14.14px" width="11" height="7" viewBox="0 0 11 7"><path d="M1 1 L5.5 6 L10 1" fill="none" stroke="#2a3fb0" stroke-width="2" stroke-linecap="round" stroke-linejoin="round"/></svg></div>
<div class="t" style="left:2244px;top:774px;font-size:29px;color:#232323;letter-spacing:1px;-webkit-text-stroke:0.3px #232323">627</div>
<div class="t" style="left:2484px;top:770px;font-size:29px;color:#232323;letter-spacing:1px;-webkit-text-stroke:0.3px #232323">$1.05</div>
<div class="t" style="left:2484px;top:803px;font-size:24.5px;color:#9aa3b5;letter-spacing:0.6px">CPO</div>
<div class="abs" style="left:0;top:854px;width:2540px;height:106px;background:#fff;border-bottom:2px solid #efeff1;box-sizing:border-box"></div>
<div class="abs" style="left:40px;top:874px;width:32px;height:32px;box-sizing:border-box;border:2px solid #dedede;border-radius:7px;background:#fff"></div>
<div class="abs" style="left:109px;top:874px;width:54px;height:54px;border-radius:14px;background:linear-gradient(135deg,#6a6de8,#8486ea);color:#fff;font-size:20px;font-weight:bold;text-align:center;line-height:52px;letter-spacing:0.5px">A-</div>
<div class="t" style="left:184px;top:887px;font-size:29px;font-weight:bold;color:#232323;letter-spacing:-0.05px">AQ - US/CA/GB - Discovery - Search</div>
<div class="abs" style="left:827px;top:874px;width:120px;height:40px;border-radius:10px;background:#d6f7ef"></div>
<div class="t" style="left:844px;top:883px;font-size:23px;color:#235c58;letter-spacing:0.45px;-webkit-text-stroke:0.25px #235c58">Active</div>
<svg class="abs" style="left:922.5px;top:891.5px" width="11" height="7" viewBox="0 0 11 7"><path d="M1 1 L5.5 6 L10 1" fill="none" stroke="#235c58" stroke-width="1.8" stroke-linecap="round" stroke-linejoin="round"/></svg>
<div class="abs" style="left:1057px;top:874px;width:72px;height:40px;border-radius:20px;background:#2a59b8"></div>
<div class="abs" style="left:1093px;top:878px;width:32px;height:32px;border-radius:50%;background:#fff"></div>
<div class="t" style="left:1339px;top:880px;font-size:29px;color:#232323;letter-spacing:1px;-webkit-text-stroke:0.3px #232323">$35.00</div>
<div class="t" style="left:1643px;top:880px;font-size:29px;color:#232323;letter-spacing:1px;-webkit-text-stroke:0.3px #232323">$3,605.87</div>
<div class="abs" style="left:1862px;top:874px;height:40px;border-radius:10px;background:#dfe8fa;padding:0 15px 0 17px;box-sizing:border-box;display:flex;align-items:center"><div style="font-size:23px;color:#2a3fb0;line-height:40px;white-space:nowrap;letter-spacing:0.86px;-webkit-text-stroke:0.25px #2a3fb0">Installs (Tap-Through)</div><svg style="margin-left:14.14px" width="11" height="7" viewBox="0 0 11 7"><path d="M1 1 L5.5 6 L10 1" fill="none" stroke="#2a3fb0" stroke-width="2" stroke-linecap="round" stroke-linejoin="round"/></svg></div>
<div class="t" style="left:2244px;top:880px;font-size:29px;color:#232323;letter-spacing:1px;-webkit-text-stroke:0.3px #232323">985</div>
<div class="t" style="left:2484px;top:876px;font-size:29px;color:#232323;letter-spacing:1px;-webkit-text-stroke:0.3px #232323">$1.20</div>
<div class="t" style="left:2484px;top:909px;font-size:24.5px;color:#9aa3b5;letter-spacing:0.6px">CPO</div>
<div class="abs" style="left:0;top:960px;width:2540px;height:106px;background:#fff;border-bottom:2px solid #efeff1;box-sizing:border-box"></div>
<div class="abs" style="left:40px;top:980px;width:32px;height:32px;box-sizing:border-box;border:2px solid #dedede;border-radius:7px;background:#fff"></div>
<div class="abs" style="left:109px;top:980px;width:54px;height:54px;border-radius:14px;background:linear-gradient(135deg,#4cba6a,#6cd083);color:#fff;font-size:20px;font-weight:bold;text-align:center;line-height:52px;letter-spacing:0.5px">A-</div>
<div class="t" style="left:184px;top:993px;font-size:29px;font-weight:bold;color:#232323;letter-spacing:-0.05px">AQ - US/CA/GB - Generic - Search</div>
<div class="abs" style="left:827px;top:980px;width:120px;height:40px;border-radius:10px;background:#d6f7ef"></div>
<div class="t" style="left:844px;top:989px;font-size:23px;color:#235c58;letter-spacing:0.45px;-webkit-text-stroke:0.25px #235c58">Active</div>
<svg class="abs" style="left:922.5px;top:997.5px" width="11" height="7" viewBox="0 0 11 7"><path d="M1 1 L5.5 6 L10 1" fill="none" stroke="#235c58" stroke-width="1.8" stroke-linecap="round" stroke-linejoin="round"/></svg>
<div class="abs" style="left:1057px;top:980px;width:72px;height:40px;border-radius:20px;background:#2a59b8"></div>
<div class="abs" style="left:1093px;top:984px;width:32px;height:32px;border-radius:50%;background:#fff"></div>
<div class="t" style="left:1339px;top:986px;font-size:29px;color:#232323;letter-spacing:1px;-webkit-text-stroke:0.3px #232323">$95.00</div>
<div class="t" style="left:1643px;top:986px;font-size:29px;color:#232323;letter-spacing:1px;-webkit-text-stroke:0.3px #232323">$3,095.24</div>
<div class="abs" style="left:1862px;top:980px;height:40px;border-radius:10px;background:#f7e8fd;padding:0 15px 0 17px;box-sizing:border-box;display:flex;align-items:center"><div style="font-size:23px;color:#ab2fc8;line-height:40px;white-space:nowrap;letter-spacing:0.1px;-webkit-text-stroke:0.25px #ab2fc8">Revenue</div><svg style="margin-left:14.90px" width="11" height="7" viewBox="0 0 11 7"><path d="M1 1 L5.5 6 L10 1" fill="none" stroke="#ab2fc8" stroke-width="2" stroke-linecap="round" stroke-linejoin="round"/></svg></div>
<div class="t" style="left:2244px;top:986px;font-size:29px;color:#232323;letter-spacing:1px;-webkit-text-stroke:0.3px #232323">$7,660.53</div>
<div class="t" style="left:2484px;top:982px;font-size:29px;color:#232323;letter-spacing:1px;-webkit-text-stroke:0.3px #232323">$0.40</div>
<div class="t" style="left:2484px;top:1015px;font-size:24.5px;color:#9aa3b5;letter-spacing:0.6px">CPO</div>
<div class="abs" style="left:0;top:1066px;width:2540px;height:106px;background:#fff;border-bottom:2px solid #efeff1;box-sizing:border-box"></div>
<div class="abs" style="left:40px;top:1086px;width:32px;height:32px;box-sizing:border-box;border:2px solid #dedede;border-radius:7px;background:#fff"></div>
<div class="abs" style="left:109px;top:1086px;width:54px;height:54px;border-radius:14px;background:linear-gradient(135deg,#ec7a36,#f29a55);color:#fff;font-size:20px;font-weight:bold;text-align:center;line-height:52px;letter-spacing:0.5px">Q-</div>
<div class="t" style="left:184px;top:1099px;font-size:29px;font-weight:bold;color:#232323;letter-spacing:-0.05px">QL - DE/FR/IT - Discovery - Search</div>
<div class="abs" style="left:827px;top:1086px;width:120px;height:40px;border-radius:10px;background:#d6f7ef"></div>
<div class="t" style="left:844px;top:1095px;font-size:23px;color:#235c58;letter-spacing:0.45px;-webkit-text-stroke:0.25px #235c58">Active</div>
<svg class="abs" style="left:922.5px;top:1103.5px" width="11" height="7" viewBox="0 0 11 7"><path d="M1 1 L5.5 6 L10 1" fill="none" stroke="#235c58" stroke-width="1.8" stroke-linecap="round" stroke-linejoin="round"/></svg>
<div class="abs" style="left:1057px;top:1086px;width:72px;height:40px;border-radius:20px;background:#2a59b8"></div>
<div class="abs" style="left:1093px;top:1090px;width:32px;height:32px;border-radius:50%;background:#fff"></div>
<div class="t" style="left:1339px;top:1092px;font-size:29px;color:#232323;letter-spacing:1px;-webkit-text-stroke:0.3px #232323">€55.00</div>
<div class="t" style="left:1643px;top:1092px;font-size:29px;color:#232323;letter-spacing:1px;-webkit-text-stroke:0.3px #232323">€2,955.28</div>
<div class="abs" style="left:1862px;top:1086px;height:40px;border-radius:10px;background:#f7e8fd;padding:0 15px 0 17px;box-sizing:border-box;display:flex;align-items:center"><div style="font-size:23px;color:#ab2fc8;line-height:40px;white-space:nowrap;letter-spacing:0.1px;-webkit-text-stroke:0.25px #ab2fc8">Revenue</div><svg style="margin-left:14.90px" width="11" height="7" viewBox="0 0 11 7"><path d="M1 1 L5.5 6 L10 1" fill="none" stroke="#ab2fc8" stroke-width="2" stroke-linecap="round" stroke-linejoin="round"/></svg></div>
<div class="t" style="left:2244px;top:1092px;font-size:29px;color:#232323;letter-spacing:1px;-webkit-text-stroke:0.3px #232323">€6,550.92</div>
<div class="t" style="left:2484px;top:1088px;font-size:29px;color:#232323;letter-spacing:1px;-webkit-text-stroke:0.3px #232323">€0.45</div>
<div class="t" style="left:2484px;top:1121px;font-size:24.5px;color:#9aa3b5;letter-spacing:0.6px">CPO</div>
<div class="abs" style="left:0;top:1172px;width:2540px;height:106px;background:#fff;border-bottom:2px solid #efeff1;box-sizing:border-box"></div>
<div class="abs" style="left:40px;top:1192px;width:32px;height:32px;box-sizing:border-box;border:2px solid #dedede;border-radius:7px;background:#fff"></div>
<div class="abs" style="left:109px;top:1192px;width:54px;height:54px;border-radius:14px;background:linear-gradient(135deg,#e0508e,#ea77a8);color:#fff;font-size:20px;font-weight:bold;text-align:center;line-height:52px;letter-spacing:0.5px">A-</div>
<div class="t" style="left:184px;top:1205px;font-size:29px;font-weight:bold;color:#232323;letter-spacing:-0.05px">AQ - US/CA/GB - Brand - Search</div>
<div class="abs" style="left:827px;top:1192px;width:120px;height:40px;border-radius:10px;background:#d6f7ef"></div>
<div class="t" style="left:844px;top:1201px;font-size:23px;color:#235c58;letter-spacing:0.45px;-webkit-text-stroke:0.25px #235c58">Active</div>
<svg class="abs" style="left:922.5px;top:1209.5px" width="11" height="7" viewBox="0 0 11 7"><path d="M1 1 L5.5 6 L10 1" fill="none" stroke="#235c58" stroke-width="1.8" stroke-linecap="round" stroke-linejoin="round"/></svg>
<div class="abs" style="left:1057px;top:1192px;width:72px;height:40px;border-radius:20px;background:#ebebee"></div>
<div class="abs" style="left:1061px;top:1196px;width:32px;height:32px;border-radius:50%;background:#fff;box-shadow:0 1px 2px rgba(0,0,0,.12)"></div>
<div class="t" style="left:1339px;top:1198px;font-size:29px;color:#232323;letter-spacing:1px;-webkit-text-stroke:0.3px #232323">$75.00</div>
<div class="t" style="left:1643px;top:1198px;font-size:29px;color:#232323;letter-spacing:1px;-webkit-text-stroke:0.3px #232323">$1,960.26</div>
<div class="abs" style="left:1862px;top:1192px;height:40px;border-radius:10px;background:#dfe8fa;padding:0 15px 0 17px;box-sizing:border-box;display:flex;align-items:center"><div style="font-size:23px;color:#2a3fb0;line-height:40px;white-space:nowrap;letter-spacing:0.86px;-webkit-text-stroke:0.25px #2a3fb0">Installs (Tap-Through)</div><svg style="margin-left:14.14px" width="11" height="7" viewBox="0 0 11 7"><path d="M1 1 L5.5 6 L10 1" fill="none" stroke="#2a3fb0" stroke-width="2" stroke-linecap="round" stroke-linejoin="round"/></svg></div>
<div class="t" style="left:2244px;top:1198px;font-size:29px;color:#232323;letter-spacing:1px;-webkit-text-stroke:0.3px #232323">532</div>
<div class="t" style="left:2484px;top:1194px;font-size:29px;color:#232323;letter-spacing:1px;-webkit-text-stroke:0.3px #232323">$1.22</div>
<div class="t" style="left:2484px;top:1227px;font-size:24.5px;color:#9aa3b5;letter-spacing:0.6px">CPO</div>
<div class="abs" style="left:0;top:1278px;width:2540px;height:106px;background:#fff;border-bottom:2px solid #efeff1;box-sizing:border-box"></div>
<div class="abs" style="left:40px;top:1298px;width:32px;height:32px;box-sizing:border-box;border:2px solid #dedede;border-radius:7px;background:#fff"></div>
<div class="abs" style="left:109px;top:1298px;width:54px;height:54px;border-radius:14px;background:linear-gradient(135deg,#e0508e,#ea77a8);color:#fff;font-size:20px;font-weight:bold;text-align:center;line-height:52px;letter-spacing:0.5px">Q-</div>
<div class="t" style="left:184px;top:1311px;font-size:29px;font-weight:bold;color:#232323;letter-spacing:-0.05px">QL - DE/FR/IT - Generic - Search</div>
<div class="abs" style="left:827px;top:1298px;width:120px;height:40px;border-radius:10px;background:#d6f7ef"></div>
<div class="t" style="left:844px;top:1307px;font-size:23px;color:#235c58;letter-spacing:0.45px;-webkit-text-stroke:0.25px #235c58">Active</div>
<svg class="abs" style="left:922.5px;top:1315.5px" width="11" height="7" viewBox="0 0 11 7"><path d="M1 1 L5.5 6 L10 1" fill="none" stroke="#235c58" stroke-width="1.8" stroke-linecap="round" stroke-linejoin="round"/></svg>
<div class="abs" style="left:1057px;top:1298px;width:72px;height:40px;border-radius:20px;background:#2a59b8"></div>
<div class="abs" style="left:1093px;top:1302px;width:32px;height:32px;border-radius:50%;background:#fff"></div>
<div class="t" style="left:1339px;top:1304px;font-size:29px;color:#232323;letter-spacing:1px;-webkit-text-stroke:0.3px #232323">€110.00</div>
<div class="t" style="left:1643px;top:1304px;font-size:29px;color:#232323;letter-spacing:1px;-webkit-text-stroke:0.3px #232323">€936.84</div>
<div class="abs" style="left:1862px;top:1298px;height:40px;border-radius:10px;background:#ede7fd;padding:0 15px 0 17px;box-sizing:border-box;display:flex;align-items:center"><div style="font-size:23px;color:#6c3fd6;line-height:40px;white-space:nowrap;letter-spacing:0.42px;-webkit-text-stroke:0.25px #6c3fd6">Purchase</div><svg style="margin-left:14.58px" width="11" height="7" viewBox="0 0 11 7"><path d="M1 1 L5.5 6 L10 1" fill="none" stroke="#6c3fd6" stroke-width="2" stroke-linecap="round" stroke-linejoin="round"/></svg></div>
<div class="t" style="left:2244px;top:1304px;font-size:29px;color:#232323;letter-spacing:1px;-webkit-text-stroke:0.3px #232323">157</div>
<div class="t" style="left:2484px;top:1300px;font-size:29px;color:#232323;letter-spacing:1px;-webkit-text-stroke:0.3px #232323">€0.60</div>
<div class="t" style="left:2484px;top:1333px;font-size:24.5px;color:#9aa3b5;letter-spacing:0.6px">CPO</div>
<div class="abs" style="left:785px;top:241px;width:2px;height:1143px;background:#e6e6e8"></div>
<div class="abs" style="left:2522px;top:241px;width:4px;height:1143px;background:#f2f2f4;z-index:2"></div>
<div class="abs" style="left:1002px;top:321px;width:229px;height:111px;box-sizing:border-box;border:2px solid #f2a93b"></div>
<div class="abs" style="left:0;top:1382px;width:2522px;height:2px;background:#efeff0;box-shadow:0 2px 4px rgba(0,0,0,.13)"></div>
<div class="abs" style="left:40px;top:1416px;width:2444px;height:2px;background:#e8e8ec"></div>
<div class="abs" style="left:1109px;top:1434px;width:197px;height:56px;box-sizing:border-box;border:2px solid #e5e7eb;border-radius:11px;background:#fff;box-shadow:0 2px 4px rgba(0,0,0,.07)"></div>
<div class="abs" style="left:1162px;top:1434px;width:92px;height:56px;box-sizing:border-box;border:2px solid #cfd3da"></div>
<div class="t" style="left:1162px;top:1451px;width:92px;text-align:center;font-size:23px;color:#27303f">1 of 1</div>
<svg class="abs" style="left:1131px;top:1453px" width="10" height="18" viewBox="0 0 10 18"><path d="M8.5 1.5 L1.5 9 L8.5 16.5" fill="none" stroke="#8a93a3" stroke-width="1.7" stroke-linecap="round" stroke-linejoin="round"/></svg>
<svg class="abs" style="left:1274px;top:1453px" width="10" height="18" viewBox="0 0 10 18"><path d="M1.5 1.5 L8.5 9 L1.5 16.5" fill="none" stroke="#8a93a3" stroke-width="1.7" stroke-linecap="round" stroke-linejoin="round"/></svg>
<div class="t" style="left:2344px;top:1451px;font-size:23px;color:#5c6475;letter-spacing:-0.1px">1–10 of 10</div>
</div>
</body></html>
